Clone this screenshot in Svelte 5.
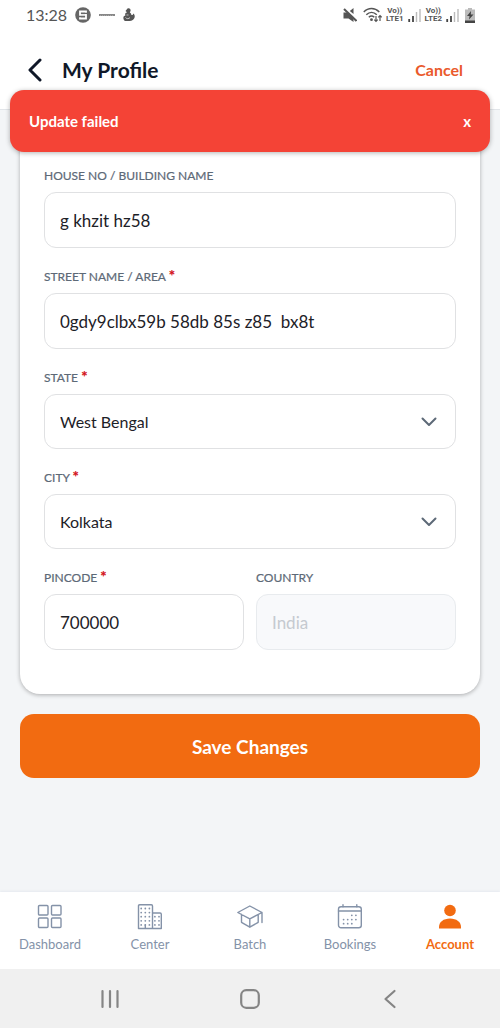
<script lang="ts">
  let showToast = $state(true)
  let house = $state('g khzit hz58')
  let street = $state('0gdy9clbx59b 58db 85s z85  bx8t')
  let region = $state('West Bengal')
  let city = $state('Kolkata')
  let pincode = $state('700000')

  const tabs = [
    { name: 'Dashboard', icon: 'grid' },
    { name: 'Center', icon: 'building' },
    { name: 'Batch', icon: 'cap' },
    { name: 'Bookings', icon: 'calendar' },
    { name: 'Account', icon: 'person' },
  ]

  const sims = ['LTE1', 'LTE2']

  function closeToast() {
    showToast = false
  }

  function save(e: Event) {
    e.preventDefault()
    showToast = true
  }
</script>

{#snippet chevron()}
  <svg class="chevron" width="16" height="10" viewBox="0 0 16 10" aria-hidden="true">
    <path d="M1.5 1.5 8 8l6.500-6.500" />
  </svg>
{/snippet}

<div class="screen">
  <div class="status">
    <div class="status-left">
      <span class="time">13:28</span>
      <svg width="16" height="16" viewBox="0 0 16 16" aria-hidden="true">
        <circle cx="8" cy="8" r="7.800" fill="#666" />
        <path d="M11 5.700V4.500H5v3.300h6v3.700H5v-1.300" fill="none" stroke="#fff" stroke-width="1.800" />
        <path d="M6 8h4" stroke="#ccc" stroke-width="0.800" />
      </svg>
      <svg width="16" height="16" viewBox="0 0 16 16" aria-hidden="true">
        <path d="M0 8h16" stroke="#888" stroke-width="2" />
        <path d="M1 8.500h14" stroke="#bbb" stroke-width="0.600" stroke-dasharray="1 1" />
      </svg>
      <svg class="bird" width="12" height="14" viewBox="0 0 12 14" aria-hidden="true">
        <path d="M4.500 0.500c2-.8 3.500.8 3 2.500L6.800 4.500c1.200.5 1.700 1.500 1.500 2.500.9.300 1.800-.2 2-1.500 1.400.8 1.700 2.500 1.200 4.300-.6 2-2.400 3.200-5 3.200H2C.8 12 0 10.500.5 9c.4-1 1-1.400 1.900-1.500C1.800 6 2.200 4.800 4 4.200L2.500 3Z" fill="#555" />
        <path d="M2.500 9.500c1 1.500 3.500 1.500 4.500 0M3.500 7h2" fill="none" stroke="#ddd" stroke-width="0.800" />
      </svg>
    </div>
    <div class="status-right">
      <svg class="mute" width="14" height="16" viewBox="0 0 14 16" aria-hidden="true">
        <path d="M0.500 5.500h4l6 5.500v4L5.500 11.500h-5ZM6.800 4l3.700-3v6Z" fill="#555" />
        <path d="M1 2l12.500 12" stroke="#555" stroke-width="2" />
      </svg>
      <svg width="19" height="16" viewBox="0 0 19 16" aria-hidden="true">
        <path d="M0.800 5c4.500-4.700 11-4.700 15.500 0M3.300 7.800c3.200-3.200 7.300-3.200 10.500 0M5.800 10.300c1.700-1.500 3.800-1.500 5.500 0" fill="none" stroke="#555" stroke-width="1.500" />
        <circle cx="8.500" cy="12.700" r="1.400" fill="#555" />
        <path d="M13 9v5.500M11.300 12.700l1.700 1.800 1.700-1.800M17 14V8.500M15.300 10.300 17 8.500l1.700 1.800" fill="none" stroke="#555" stroke-width="1.200" />
      </svg>
      {#each sims as sim}
        <span class="sim"><span>Vo))</span><span>{sim}</span></span>
        <svg width="13" height="14" viewBox="0 0 13 14" aria-hidden="true">
          <path d="M1.200 11v3M5 8v6" stroke="#444" stroke-width="1.800" />
          <path d="M8.500 4v10M12 1v13" stroke="#bbb" stroke-width="1.400" />
        </svg>
      {/each}
      <svg class="battery" width="10" height="15" viewBox="0 0 10 15" aria-hidden="true">
        <path d="M3 0h4v1.500h3V15H0V1.500h3Z" fill="#bbb" />
        <path d="M0 12.500h10V15H0Z" fill="#444" />
        <path d="M6 3 2 8h2.500L4 11.500 8.500 6.500H5.800Z" fill="#444" />
      </svg>
    </div>
  </div>

  <header class="header">
    <button class="back" aria-label="Back">
      <svg width="14" height="24" viewBox="0 0 14 24" aria-hidden="true">
        <path d="M12 2 2 12l10 10" fill="none" stroke="#101828" stroke-width="3" stroke-linecap="round" stroke-linejoin="round" />
      </svg>
    </button>
    <h1>My Profile</h1>
    <button class="cancel">Cancel</button>

    {#if showToast}
      <div class="toast" role="alert">
        <span>Update failed</span>
        <button aria-label="Close" onclick={closeToast}>x</button>
      </div>
    {/if}
  </header>

  <form class="main" onsubmit={save}>
    <div class="card">
      <div class="field">
        <label for="house">HOUSE NO / BUILDING NAME</label>
        <input id="house" bind:value={house} />
      </div>
      <div class="field">
        <label for="street">STREET NAME / AREA <b>*</b></label>
        <input id="street" bind:value={street} />
      </div>
      <div class="field">
        <label for="region">STATE <b>*</b></label>
        <div class="select">
          <select id="region" bind:value={region}>
            <option>West Bengal</option>
          </select>
          {@render chevron()}
        </div>
      </div>
      <div class="field">
        <label for="city">CITY <b>*</b></label>
        <div class="select">
          <select id="city" bind:value={city}>
            <option>Kolkata</option>
          </select>
          {@render chevron()}
        </div>
      </div>
      <div class="row">
        <div class="field">
          <label for="pincode">PINCODE <b>*</b></label>
          <input id="pincode" inputmode="numeric" bind:value={pincode} />
        </div>
        <div class="field">
          <label for="country">COUNTRY</label>
          <input id="country" value="India" disabled />
        </div>
      </div>
    </div>

    <button class="save" type="submit">Save Changes</button>
  </form>

  <nav class="tabs">
    {#each tabs as tab}
      <a href="#{tab.icon}" class:active={tab.name === 'Account'}>
        <svg width="26" height="26" viewBox="0 0 26 26" aria-hidden="true">
          {#if tab.icon === 'grid'}
            <rect x="1.500" y="1.500" width="9.500" height="9.500" rx="1" />
            <rect x="14.500" y="1.500" width="9.500" height="9.500" rx="1" />
            <rect x="1.500" y="14" width="9.500" height="9.500" rx="1" />
            <rect x="14.500" y="14" width="9.500" height="9.500" rx="1" />
          {:else if tab.icon === 'building'}
            <path d="M1.500 24.500V2q0-1.200 1.200-1.200h11.600q1.200 0 1.200 1.200v22.500ZM15.500 9h7.600q1.200 0 1.200 1.200v14.300h-8.800M8.300 24.500v-3.500" />
            <path class="dots" d="M4.200 4.500h9M4.200 8.600h9M4.200 12.700h9M4.200 16.800h9M4.200 20.900h9M17.900 12.700h5M17.900 16.800h5M17.900 20.900h5" />
          {:else if tab.icon === 'cap'}
            <path d="M0.800 8.500 12.800 2 25 8.500l-12.200 6.300ZM4.500 10.500v7.800l8.300 4.900 8.400-4.900v-7.800M12.800 14.800v8.400M25 8.500v10" />
          {:else if tab.icon === 'calendar'}
            <rect x="1.500" y="2.800" width="22.800" height="21" rx="2.500" />
            <path d="M1.500 7h22.800M6 0.800v2M19.800 0.800v2" />
            <path class="dots" d="M14.800 11.300h5M6.600 15.600h14M6.600 19.700h9" />
          {:else}
            <circle class="solid" cx="13" cy="6.500" r="5.800" />
            <path class="solid" d="M2 24.500v-1.500C2 18 6.500 14.500 13 14.500S24 18 24 23v1.500Z" />
          {/if}
        </svg>
        <span>{tab.name}</span>
      </a>
    {/each}
  </nav>

  <div class="system">
    <button aria-label="Recent apps">
      <svg width="20" height="20" viewBox="0 0 20 20" aria-hidden="true">
        <path d="M2.500 2v16M10 2v16M17.500 2v16" />
      </svg>
    </button>
    <button aria-label="Home">
      <svg width="20" height="20" viewBox="0 0 20 20" aria-hidden="true">
        <rect x="1.200" y="1.200" width="17.600" height="17.600" rx="5" />
      </svg>
    </button>
    <button aria-label="Go back">
      <svg width="20" height="20" viewBox="0 0 20 20" aria-hidden="true">
        <path d="M14.500 2 5.500 10l9 8" />
      </svg>
    </button>
  </div>
</div>

<style>
  :global(body) {
    margin: 0;
  }

  .screen {
    min-height: 100vh;
    display: flex;
    flex-direction: column;
    background: #f3f5f7;
    color: #1d2127;
    font-family: Lato, "Noto Sans", sans-serif;
  }

  .screen *,
  .screen {
    box-sizing: border-box;
  }

  button {
    padding: 0;
    border: 0;
    background: none;
    font: inherit;
    color: inherit;
    cursor: pointer;
  }

  svg {
    flex: none;
    display: block;
  }

  .status {
    height: 30px;
    padding: 0 25px 0 26px;
    display: flex;
    align-items: center;
    justify-content: space-between;
    background: #fff;
    color: #555;
  }

  .status-left {
    display: flex;
    align-items: center;
    gap: 8px;
  }

  .time {
    font-size: 16px;
    line-height: 24px;
  }

  .status-right {
    display: flex;
    align-items: center;
    gap: 4px;
  }

  .sim {
    display: flex;
    flex-direction: column;
    align-items: center;
    font-family: Roboto, sans-serif;
    font-size: 8px;
    font-weight: 700;
    line-height: 8px;
  }

  .mute {
    margin-right: 2px;
  }

  .battery {
    margin-left: 2px;
  }

  .header {
    position: relative;
    height: 80px;
    padding: 0 37px 0 28px;
    display: flex;
    align-items: center;
    background: #fff;
    border-bottom: 1px solid #e2e5e9;
  }

  h1 {
    flex: 1;
    margin: 0 0 0 20px;
    font-size: 21px;
    font-weight: 700;
    line-height: 28px;
    color: #101828;
  }

  .cancel {
    font-size: 16px;
    font-weight: 700;
    line-height: 24px;
    color: #ea5a2c;
  }

  .toast {
    position: absolute;
    top: 60px;
    left: 10px;
    right: 10px;
    z-index: 1;
    min-height: 62px;
    padding: 0 19px;
    display: flex;
    align-items: center;
    justify-content: space-between;
    border-radius: 14px;
    background: #f44336;
    box-shadow: 0 1px 5px rgba(0, 0, 0, 0.3);
    color: #fff;
    font-size: 15px;
    font-weight: 700;
    line-height: 20px;
  }

  .main {
    flex: 1;
    padding: 0 20px 20px;
    display: flex;
    flex-direction: column;
    gap: 20px;
  }

  .card {
    padding: 58px 24px 44px;
    display: flex;
    flex-direction: column;
    gap: 21px;
    border-radius: 0 0 20px 20px;
    background: #fff;
    box-shadow: 0 1px 4px rgba(0, 0, 0, 0.3);
  }

  .row {
    display: flex;
    gap: 12px;
  }

  .field {
    flex: 1;
    min-width: 0;
    display: flex;
    flex-direction: column;
    gap: 8px;
  }

  label {
    font-size: 12px;
    line-height: 16px;
    color: #5d6977;
    -webkit-text-stroke: 0.2px currentColor;
  }

  label b {
    font-size: 15px;
    line-height: 1px;
    color: #d3121b;
  }

  input,
  select {
    width: 100%;
    height: 56px;
    margin: 0;
    padding: 0 15px;
    border: 1px solid #e0e1e3;
    border-radius: 12px;
    background: #fff;
    color: #1d2127;
    font-family: inherit;
    font-size: 17px;
  }

  input:disabled {
    border-color: #e8ebee;
    background: #f8f9fb;
    color: #c5cad0;
  }

  .select {
    display: grid;
    align-items: center;
  }

  .select > :global(*) {
    grid-area: 1 / 1;
  }

  select {
    height: 55px;
    appearance: none;
    font-size: 16px;
  }

  .chevron {
    justify-self: end;
    margin-right: 19px;
    pointer-events: none;
    fill: none;
    stroke: #5d6977;
    stroke-width: 2;
    stroke-linecap: round;
    stroke-linejoin: round;
  }

  .save {
    height: 64px;
    border-radius: 14px;
    background: #f26b11;
    color: #fff;
    font-size: 19px;
    font-weight: 700;
  }

  .tabs {
    height: 77px;
    padding-top: 12px;
    display: flex;
    background: #fff;
    box-shadow: 0 -1px 2px #e6eaef;
  }

  .tabs a {
    flex: 1;
    display: flex;
    flex-direction: column;
    align-items: center;
    gap: 6px;
    color: #8492a8;
    font-size: 13px;
    line-height: 16px;
    text-decoration: none;
  }

  .tabs svg {
    fill: none;
    stroke: currentColor;
    stroke-width: 1.4;
    stroke-linejoin: round;
    stroke-linecap: round;
  }

  .tabs .dots {
    stroke-width: 1.8;
    stroke-dasharray: 0 4.1;
  }

  .tabs .solid {
    fill: currentColor;
    stroke: none;
  }

  .tabs .active {
    color: #f26b11;
    font-weight: 700;
  }

  .system {
    height: 59px;
    padding: 0 40px;
    display: flex;
    align-items: center;
    background: #f0f0f0;
  }

  .system button {
    flex: 1;
    display: flex;
    justify-content: center;
  }

  .system svg {
    fill: none;
    stroke: #858585;
    stroke-width: 2.2;
    stroke-linecap: round;
    stroke-linejoin: round;
  }
</style>
